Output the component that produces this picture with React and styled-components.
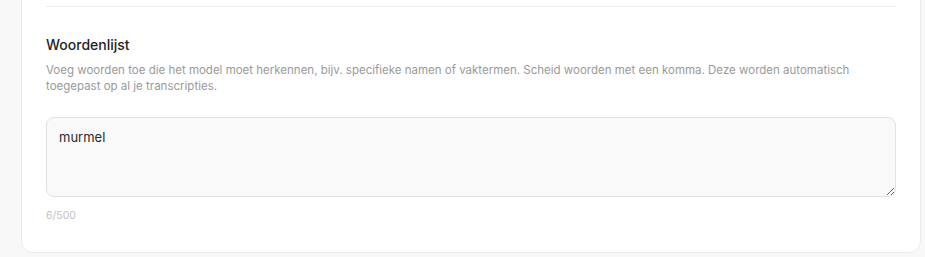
import styled, { createGlobalStyle } from 'styled-components';

const GlobalStyle = createGlobalStyle`
  html, body {
    margin: 0;
    padding: 0;
    background: #f8f8f8;
    font-family: Inter, 'Noto Sans', sans-serif;
    overflow: hidden;
  }
`;

const Page = styled.main`
  padding: 0 4px 0 21px;
`;

const Card = styled.section`
  margin-top: -12px;
  background: #fff;
  border: 1px solid #ebebeb;
  border-radius: 12px;
  padding: 17px 24px 28px;
`;

const Divider = styled.hr`
  border: none;
  border-top: 1px solid #ececec;
  margin: 0 0 28px;
`;

const Title = styled.h3`
  margin: 0;
  font-size: 14px;
  line-height: 20px;
  font-weight: 500;
  color: #1f1f1f;
`;

const Description = styled.p`
  margin: 7px 0 0;
  font-size: 11.5px;
  line-height: 16px;
  color: #9a9a9a;
  max-width: 830px;
`;

const TextArea = styled.textarea`
  display: block;
  box-sizing: border-box;
  width: 100%;
  height: 80px;
  margin-top: 23px;
  padding: 9px 12px;
  background: #f9f9f9;
  border: 1px solid #e2e2e2;
  border-radius: 8px;
  font-family: inherit;
  font-size: 13px;
  line-height: 20px;
  color: #2a2a2a;
  outline: none;
`;

const Counter = styled.div`
  margin-top: 11px;
  font-size: 10.5px;
  line-height: 16px;
  color: #c2c2c2;
`;

export default function App() {
  return (
    <Page>
      <GlobalStyle />
      <Card>
        <Divider />
        <Title>Woordenlijst</Title>
        <Description>
          Voeg woorden toe die het model moet herkennen, bijv. specifieke namen of vaktermen. Scheid woorden met een komma. Deze worden automatisch toegepast op al je transcripties.
        </Description>
        <TextArea defaultValue="murmel" />
        <Counter>6/500</Counter>
      </Card>
    </Page>
  );
}
